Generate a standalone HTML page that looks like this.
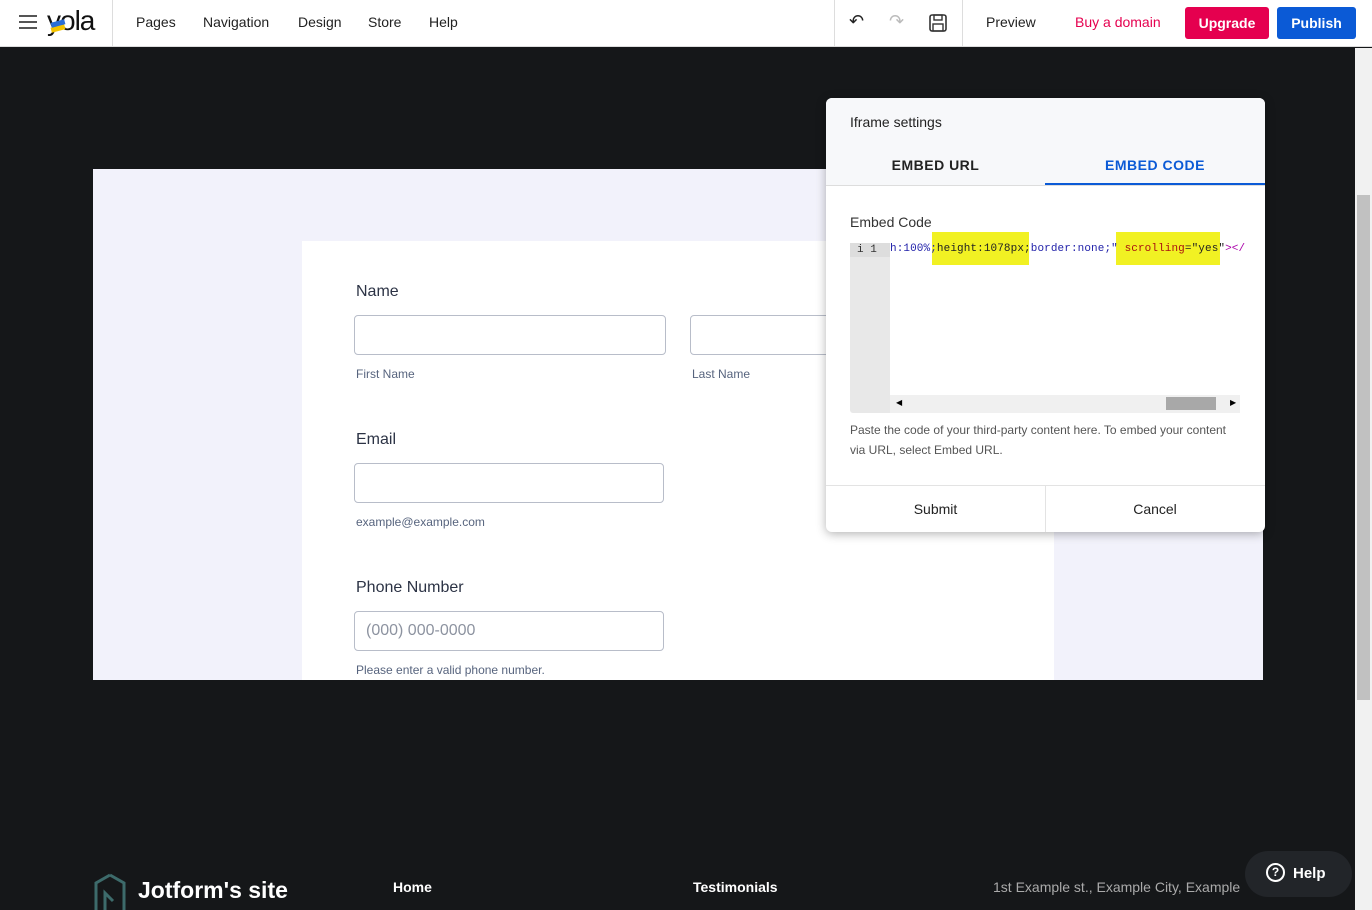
<!DOCTYPE html>
<html><head><meta charset="utf-8"><style>
*{box-sizing:border-box;margin:0;padding:0}
body{width:1372px;height:910px;overflow:hidden;background:#151719;font-family:"Liberation Sans",sans-serif;position:relative}
.top{position:absolute;left:0;top:0;width:1372px;height:47px;background:#fff;border-bottom:1px solid #ddd}
.abs{position:absolute}
.nav{font-size:14px;color:#222;top:14px}
.sb{position:absolute;left:1355px;top:48px;width:17px;height:862px;background:#f1f1f1}
.thumb{position:absolute;left:1357px;top:195px;width:13px;height:505px;background:#c1c1c1}
.sec{position:absolute;left:93px;top:169px;width:1170px;height:511px;background:#f2f2fb}
.card{position:absolute;left:302px;top:241px;width:752px;height:439px;background:#fff}
.lbl{position:absolute;font-size:16px;color:#2c3345}
.inp{position:absolute;border:1px solid #b8bdc9;border-radius:4px;background:#fff;height:40px}
.sub{position:absolute;font-size:12px;color:#57647e}
.modal{position:absolute;left:826px;top:98px;width:439px;height:434px;background:#fff;border-radius:6px;box-shadow:0 2px 10px rgba(0,0,0,.3);overflow:hidden}
.mono{font-family:"Liberation Mono",monospace;font-size:11px}
</style></head><body>
<div class="top">
 <div class="abs" style="left:19px;top:15px;width:18px;height:2px;background:#555;box-shadow:0 6px 0 #555,0 12px 0 #555"></div>
 <div class="abs" style="left:47px;top:5px;font-size:28px;color:#111;letter-spacing:-1px">yola</div>
 <div class="abs" style="left:51px;top:26px;width:14px;height:5px;background:#f5c400;transform:rotate(-15deg)"></div>
 <div class="abs" style="left:51px;top:21px;width:14px;height:5px;background:#2a6ed8;transform:rotate(-15deg)"></div>
 <div class="abs" style="left:112px;top:0;width:1px;height:47px;background:#ddd"></div>
 <div class="abs nav" style="left:136px">Pages</div>
 <div class="abs nav" style="left:203px">Navigation</div>
 <div class="abs nav" style="left:298px">Design</div>
 <div class="abs nav" style="left:368px">Store</div>
 <div class="abs nav" style="left:429px">Help</div>
 <div class="abs" style="left:834px;top:0;width:1px;height:47px;background:#ddd"></div>
 <div class="abs" style="left:849px;top:11px;font-size:18px;color:#222">↶</div>
 <div class="abs" style="left:889px;top:11px;font-size:18px;color:#bbb">↷</div>
 <svg class="abs" style="left:928px;top:13px" width="20" height="20" viewBox="0 0 20 20"><rect x="2" y="2" width="16" height="16" rx="2" fill="none" stroke="#333" stroke-width="1.6"/><rect x="6" y="2" width="8" height="5" fill="none" stroke="#333" stroke-width="1.4"/><rect x="5" y="11" width="10" height="7" fill="none" stroke="#333" stroke-width="1.4"/></svg>
 <div class="abs" style="left:962px;top:0;width:1px;height:47px;background:#ddd"></div>
 <div class="abs nav" style="left:986px">Preview</div>
 <div class="abs nav" style="left:1075px;color:#e5004f">Buy a domain</div>
 <div class="abs" style="left:1185px;top:7px;width:84px;height:32px;background:#e5004f;border-radius:3px;color:#fff;font-weight:bold;font-size:14px;text-align:center;line-height:32px">Upgrade</div>
 <div class="abs" style="left:1277px;top:7px;width:79px;height:32px;background:#0b5ad6;border-radius:3px;color:#fff;font-weight:bold;font-size:14px;text-align:center;line-height:32px">Publish</div>
</div>
<div class="sb"></div><div class="thumb"></div>
<div class="sec"></div>
<div class="card"></div>
<div class="lbl" style="left:356px;top:283px">Name</div>
<div class="inp" style="left:354px;top:315px;width:312px"></div>
<div class="inp" style="left:690px;top:315px;width:200px"></div>
<div class="sub" style="left:356px;top:367px">First Name</div>
<div class="sub" style="left:692px;top:367px">Last Name</div>
<div class="lbl" style="left:356px;top:431px">Email</div>
<div class="inp" style="left:354px;top:463px;width:310px"></div>
<div class="sub" style="left:356px;top:515px">example@example.com</div>
<div class="lbl" style="left:356px;top:579px">Phone Number</div>
<div class="inp" style="left:354px;top:611px;width:310px;font-size:16px;color:#8d93a0;padding:10px 11px">(000) 000-0000</div>
<div class="sub" style="left:356px;top:663px">Please enter a valid phone number.</div>

<div class="modal">
 <div class="abs" style="left:0;top:0;width:439px;height:88px;background:#f7f8fa;border-bottom:1px solid #ddd"></div>
 <div class="abs" style="left:24px;top:16px;font-size:14px;color:#222">Iframe settings</div>
 <div class="abs" style="left:0;top:59px;width:219px;text-align:center;font-size:14px;font-weight:bold;color:#222;letter-spacing:.5px">EMBED URL</div>
 <div class="abs" style="left:219px;top:59px;width:220px;text-align:center;font-size:14px;font-weight:bold;color:#0b5ad6;letter-spacing:.5px">EMBED CODE</div>
 <div class="abs" style="left:219px;top:85px;width:220px;height:2px;background:#0b5ad6"></div>
 <div class="abs" style="left:24px;top:116px;font-size:14px;color:#333">Embed Code</div>
 <div class="abs" style="left:24px;top:145px;width:390px;height:170px;background:#fff;border-radius:3px">
  <div class="abs" style="left:0;top:0;width:40px;height:170px;background:#e8e8e8;border-radius:3px 0 0 3px"></div>
  <div class="abs" style="left:0;top:0;width:40px;height:14px;background:#ddd"></div>
  <div class="abs mono" style="left:7px;top:1px;color:#333">i 1</div>
  <div class="abs" style="left:82px;top:-11px;width:97px;height:33px;background:#f1f123"></div>
  <div class="abs" style="left:266px;top:-11px;width:104px;height:33px;background:#f1f123"></div>
  <div class="abs mono" style="left:40px;top:0px;white-space:nowrap;color:#22a;letter-spacing:.1px"><span>h:100%;</span><span style="color:#222">height:1078px;</span>border:none;" <span style="color:#a11">scrolling</span><span style="color:#222">=</span><span style="color:#222">"yes"</span><span style="color:#a0a">&gt;&lt;/</span></div>
  <div class="abs" style="left:40px;top:152px;width:350px;height:18px;background:#f0f0f0"></div>
  <div class="abs" style="left:316px;top:154px;width:50px;height:13px;background:#a8a8a8"></div>
  <div class="abs" style="left:46px;top:155px;font-size:8px">◀</div>
  <div class="abs" style="left:380px;top:155px;font-size:8px">▶</div>
 </div>
 <div class="abs" style="left:24px;top:322px;width:385px;font-size:12px;line-height:20px;color:#555">Paste the code of your third-party content here. To embed your content via URL, select Embed URL.</div>
 <div class="abs" style="left:0;top:387px;width:439px;height:1px;background:#e3e3e3"></div>
 <div class="abs" style="left:219px;top:387px;width:1px;height:47px;background:#e3e3e3"></div>
 <div class="abs" style="left:0;top:403px;width:219px;text-align:center;font-size:14px;color:#222">Submit</div>
 <div class="abs" style="left:219px;top:403px;width:220px;text-align:center;font-size:14px;color:#222">Cancel</div>
</div>

<svg class="abs" style="left:93px;top:873px" width="34" height="37" viewBox="0 0 34 37"><path d="M17 2 L31 10 L31 37 M3 37 L3 10 L17 2 M12 37 L12 20 L20 28" fill="none" stroke="#3d6b6b" stroke-width="3"/></svg>
<div class="abs" style="left:138px;top:877px;font-size:23px;font-weight:bold;color:#fff">Jotform's site</div>
<div class="abs" style="left:393px;top:879px;font-size:14px;font-weight:bold;color:#fff">Home</div>
<div class="abs" style="left:693px;top:879px;font-size:14px;font-weight:bold;color:#fff">Testimonials</div>
<div class="abs" style="left:993px;top:879px;font-size:14px;color:#aaa;white-space:nowrap;width:260px;overflow:hidden">1st Example st., Example City, Example</div>
<div class="abs" style="left:1245px;top:851px;width:107px;height:46px;border-radius:23px;background:#222529;color:#fff;font-weight:bold;font-size:15px;line-height:46px;padding-left:21px"><span style="display:inline-block;width:19px;height:19px;border:2px solid #fff;border-radius:50%;font-size:12px;line-height:15px;text-align:center;vertical-align:middle;margin-right:8px;margin-top:-3px">?</span>Help</div>
</body></html>
